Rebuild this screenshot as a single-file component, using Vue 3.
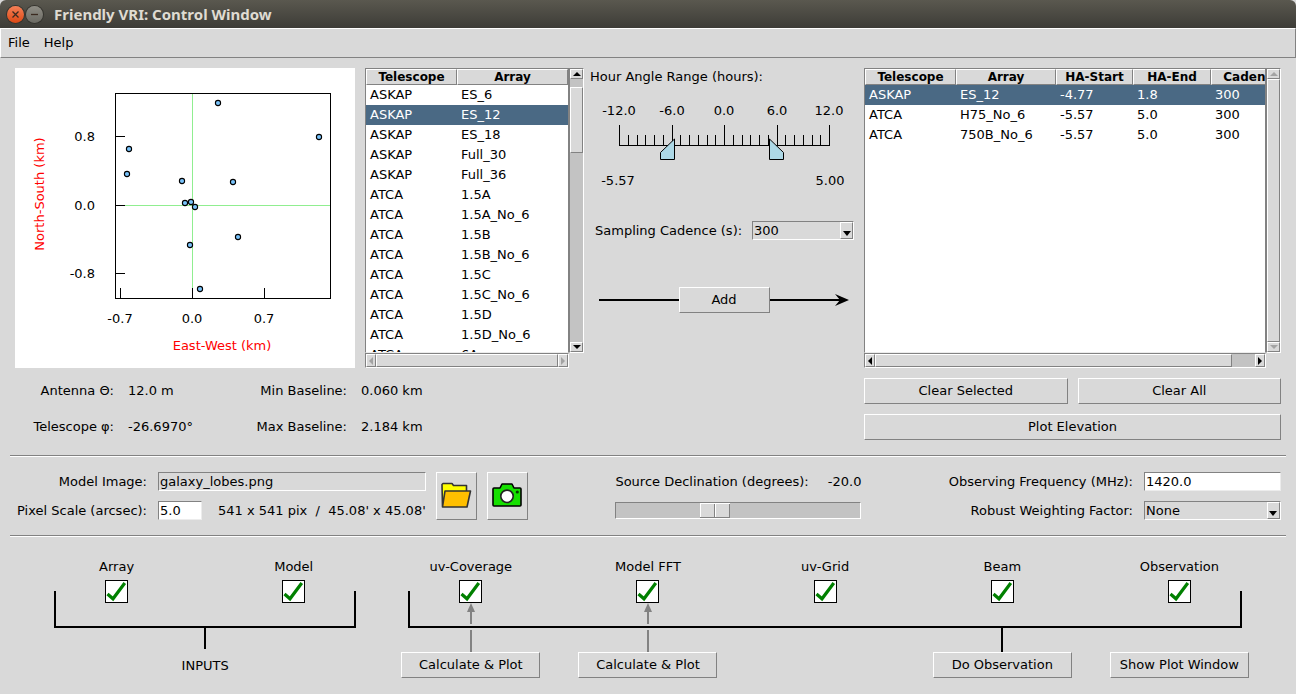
<script setup>
import { ref } from 'vue'

const antennas = [
  [203, 35], [304, 69], [114, 81], [112, 106], [167, 113], [170, 135],
  [176, 134], [180, 139], [218, 114], [223, 169], [175, 177], [185, 221]
]
const arrays = [
  ['ASKAP', 'ES_6'], ['ASKAP', 'ES_12'], ['ASKAP', 'ES_18'], ['ASKAP', 'Full_30'],
  ['ASKAP', 'Full_36'], ['ATCA', '1.5A'], ['ATCA', '1.5A_No_6'], ['ATCA', '1.5B'],
  ['ATCA', '1.5B_No_6'], ['ATCA', '1.5C'], ['ATCA', '1.5C_No_6'], ['ATCA', '1.5D'],
  ['ATCA', '1.5D_No_6'], ['ATCA', '6A']
]
const selections = [
  ['ASKAP', 'ES_12', '-4.77', '1.8', '300'],
  ['ATCA', 'H75_No_6', '-5.57', '5.0', '300'],
  ['ATCA', '750B_No_6', '-5.57', '5.0', '300']
]
const selectedArray = ref(1)
const selectedRow = ref(0)

const ticks = Array.from({ length: 25 }, (_, i) => ({
  x: 29 + Math.round(i * 8.75),
  label: i % 6 === 0 ? (i - 12).toFixed(1) : ''
}))
const haStart = ref(-5.57)
const haEnd = ref(5)
const cadence = ref('300')
const declination = ref(-20)
const robust = ref('None')
const imageName = ref('galaxy_lobes.png')
const pixelScale = ref('5.0')
const frequency = ref('1420.0')

const stages = ref([
  { id: 'array', label: 'Array', done: true },
  { id: 'model', label: 'Model', done: true },
  { id: 'uvcov', label: 'uv-Coverage', done: true, action: 'Calculate & Plot', link: 'arrow' },
  { id: 'fft', label: 'Model FFT', done: true, action: 'Calculate & Plot', link: 'arrow' },
  { id: 'grid', label: 'uv-Grid', done: true },
  { id: 'beam', label: 'Beam', done: true, action: 'Do Observation', link: 'stem' },
  { id: 'obs', label: 'Observation', done: true, action: 'Show Plot Window' }
])
</script>

<template>
  <div class="window">
    <header class="titlebar">
      <button class="wm close" aria-label="Close">
        <svg width="17" height="17" viewBox="0 0 17 17"><path d="M5.5 5.5l6 6M11.5 5.5l-6 6" /></svg>
      </button>
      <button class="wm minimise" aria-label="Minimise">
        <svg width="17" height="17" viewBox="0 0 17 17"><path d="M5 8.5h7" /></svg>
      </button>
      <h1>Friendly VRI: Control Window</h1>
    </header>

    <nav class="menubar">
      <button>File</button>
      <button>Help</button>
    </nav>

    <main>
      <section class="top">
        <div class="left">
          <div class="pair">
            <svg class="plot" width="340" height="300" viewBox="0 0 340 300">
              <g class="cross">
                <path d="M177.500 25V230M100 137.500H315" />
              </g>
              <g class="frame">
                <rect x="100.500" y="25.500" width="215" height="205" />
                <path d="M100 68.500h10M100 137.500h10M100 205.500h10M105.500 230v-10M177.500 230v-10M249.500 230v-10" />
              </g>
              <circle v-for="(p, i) in antennas" :key="i" :cx="p[0]" :cy="p[1]" r="2.600" />
              <g text-anchor="end">
                <text x="80" y="73">0.8</text>
                <text x="80" y="142">0.0</text>
                <text x="80" y="210">-0.8</text>
              </g>
              <g text-anchor="middle">
                <text x="105" y="255">-0.7</text>
                <text x="177" y="255">0.0</text>
                <text x="249" y="255">0.7</text>
                <text class="axis" x="207" y="282">East-West (km)</text>
                <text class="axis" transform="translate(29 126) rotate(-90)">North-South (km)</text>
              </g>
            </svg>

            <div class="list arrays">
              <div class="view">
                <table>
                  <colgroup><col class="c91"><col></colgroup>
                  <thead><tr><th>Telescope</th><th>Array</th></tr></thead>
                  <tbody>
                    <tr v-for="(r, i) in arrays" :key="i" :class="{ on: i === selectedArray }" @click="selectedArray = i">
                      <td v-for="c in r" :key="c">{{ c }}</td>
                    </tr>
                  </tbody>
                </table>
              </div>
              <div class="bar vert">
                <button aria-label="Scroll up"><svg width="8" height="4" viewBox="0 0 8 4"><path d="M0 4L4 0L8 4z" /></svg></button>
                <div class="track"><div class="thumb part"></div></div>
                <button aria-label="Scroll down"><svg width="8" height="4" viewBox="0 0 8 4"><path d="M0 0L4 4L8 0z" /></svg></button>
              </div>
              <div class="bar horiz">
                <button disabled aria-label="Scroll left"><svg width="4" height="8" viewBox="0 0 4 8"><path d="M4 0L0 4L4 8z" /></svg></button>
                <div class="track"><div class="thumb"></div></div>
                <button disabled aria-label="Scroll right"><svg width="4" height="8" viewBox="0 0 4 8"><path d="M0 0L4 4L0 8z" /></svg></button>
              </div>
            </div>
          </div>

          <dl class="facts">
            <dt>Antenna Θ:</dt><dd>12.0 m</dd>
            <dt>Min Baseline:</dt><dd>0.060 km</dd>
            <dt>Telescope φ:</dt><dd>-26.6970°</dd>
            <dt>Max Baseline:</dt><dd>2.184 km</dd>
          </dl>
        </div>

        <div class="middle">
          <h2>Hour Angle Range (hours):</h2>
          <div class="hours">
            <svg width="268" height="110" viewBox="0 2 268 110">
              <path class="rule" d="M29 61.500H240" />
              <g v-for="t in ticks" :key="t.x">
                <path class="rule" :d="`M${t.x + 0.5} 61V${t.label ? 41 : 51}`" />
                <text v-if="t.label" :x="t.x" y="31" text-anchor="middle">{{ t.label }}</text>
              </g>
              <text x="28" y="101" text-anchor="middle">{{ haStart.toFixed(2) }}</text>
              <text x="240" y="101" text-anchor="middle">{{ haEnd.toFixed(2) }}</text>
            </svg>
            <input v-model.number="haStart" class="from" type="range" min="-12" max="12" step="any" aria-label="Hour angle start">
            <input v-model.number="haEnd" class="to" type="range" min="-12" max="12" step="any" aria-label="Hour angle end">
          </div>
          <div class="cadence">
            <label for="cadence">Sampling Cadence (s):</label>
            <span class="combo">
              <select id="cadence" v-model="cadence"><option>60</option><option>300</option><option>600</option></select>
              <span class="drop"><svg width="8" height="5" viewBox="0 0 8 5"><path d="M0 0L4 5L8 0z" /></svg></span>
            </span>
          </div>
          <div class="add">
            <span class="line"></span>
            <button class="btn">Add</button>
            <span class="line tip"></span>
            <svg class="head" width="14" height="12" viewBox="0 0 14 12"><path d="M0 0L14 6L0 12L5 6z" /></svg>
          </div>
        </div>

        <div class="right">
          <div class="list chosen">
            <div class="view">
              <table>
                <colgroup><col class="c91"><col class="c100"><col class="c77"><col class="c78"><col></colgroup>
                <thead><tr><th>Telescope</th><th>Array</th><th>HA-Start</th><th>HA-End</th><th>Cadence</th></tr></thead>
                <tbody>
                  <tr v-for="(r, i) in selections" :key="i" :class="{ on: i === selectedRow }" @click="selectedRow = i">
                    <td v-for="(c, j) in r" :key="j">{{ c }}</td>
                  </tr>
                </tbody>
              </table>
            </div>
            <div class="bar vert">
              <button disabled aria-label="Scroll up"><svg width="8" height="4" viewBox="0 0 8 4"><path d="M0 4L4 0L8 4z" /></svg></button>
              <div class="track"><div class="thumb"></div></div>
              <button disabled aria-label="Scroll down"><svg width="8" height="4" viewBox="0 0 8 4"><path d="M0 0L4 4L8 0z" /></svg></button>
            </div>
            <div class="bar horiz">
              <button aria-label="Scroll left"><svg width="4" height="8" viewBox="0 0 4 8"><path d="M4 0L0 4L4 8z" /></svg></button>
              <div class="track"><div class="thumb part"></div></div>
              <button aria-label="Scroll right"><svg width="4" height="8" viewBox="0 0 4 8"><path d="M0 0L4 4L0 8z" /></svg></button>
            </div>
          </div>
          <div class="actions">
            <button class="btn">Clear Selected</button>
            <button class="btn">Clear All</button>
            <button class="btn wide">Plot Elevation</button>
          </div>
        </div>
      </section>

      <hr>

      <section class="settings">
        <div class="model">
          <label for="image">Model Image:</label>
          <input id="image" v-model="imageName" class="field flat" readonly>
          <label for="scale">Pixel Scale (arcsec):</label>
          <div class="scale">
            <input id="scale" v-model="pixelScale" class="field">
            <span>541 x 541 pix&nbsp; /&nbsp; 45.08' x 45.08'</span>
          </div>
          <button class="btn icon" aria-label="Open model image">
            <svg width="31" height="28" viewBox="0 0 31 28">
              <path d="M1 24V2.500L2 1.500H11L12.500 3.500H25.500V9H4z" fill="#ffff00" />
              <path d="M4 9H29.500L26 25H1.500z" fill="#ffbf00" />
              <path d="M1.500 25L1 2.500L2 1.500H11L12.500 3.500H25.500V9M4 9H29.500L26 25H1.500z" fill="none" stroke="#333" stroke-width="1.600" stroke-linejoin="round" />
            </svg>
          </button>
          <button class="btn icon" aria-label="Capture model image">
            <svg width="31" height="28" viewBox="0 0 31 28">
              <path d="M2 6H8L10 2H20L22 6H28Q29 6 29 7V23Q29 24 28 24H2Q1 24 1 23V7Q1 6 2 6z" fill="#16e000" stroke="#000" stroke-width="1.600" stroke-linejoin="round" />
              <circle cx="15" cy="14.300" r="6.200" fill="#fff" stroke="#222" stroke-width="1.600" />
              <circle cx="25.300" cy="10" r="1.600" fill="#063c00" />
            </svg>
          </button>
        </div>

        <div class="declination">
          <label for="dec">Source Declination (degrees):</label>
          <output for="dec">{{ declination.toFixed(1) }}</output>
          <input id="dec" v-model.number="declination" type="range" min="-90" max="90">
        </div>

        <div class="observe">
          <label for="freq">Observing Frequency (MHz):</label>
          <input id="freq" v-model="frequency" class="field">
          <label for="robust">Robust Weighting Factor:</label>
          <span class="combo">
            <select id="robust" v-model="robust"><option>None</option><option>0.0</option><option>2.0</option></select>
            <span class="drop"><svg width="8" height="5" viewBox="0 0 8 5"><path d="M0 0L4 5L8 0z" /></svg></span>
          </span>
        </div>
      </section>

      <hr>

      <section class="stages">
        <div class="bracket inputs"></div>
        <div class="bracket outputs"></div>
        <div class="group"><i class="stem"></i><span>INPUTS</span></div>
        <div v-for="s in stages" :key="s.id" class="stage">
          <label :for="s.id">{{ s.label }}</label>
          <input :id="s.id" v-model="s.done" type="checkbox">
          <div class="link">
            <svg v-if="s.link === 'arrow'" width="12" height="49" viewBox="0 0 12 49">
              <path d="M6 8V21M6 27V49" stroke="#828282" stroke-width="2" />
              <path d="M6 0L10 9H2z" fill="#828282" />
            </svg>
            <i v-if="s.link === 'stem'" class="stem"></i>
          </div>
          <button v-if="s.action" class="btn">{{ s.action }}</button>
        </div>
      </section>
    </main>
  </div>
</template>

<style>
body {
  margin: 0;
  background: #d9d9d9;
}
</style>

<style scoped>
.window {
  --light: #ffffff;
  --dark: #828282;
  --face: #d9d9d9;
  --trough: #c3c3c3;
  min-height: 100vh;
  background: var(--face);
  color: #000;
  font: 13px/16px "DejaVu Sans", sans-serif;
}
.window * {
  box-sizing: border-box;
}
button, input, select {
  margin: 0;
  padding: 0;
  border: 0;
  border-radius: 0;
  background: transparent;
  color: inherit;
  font: inherit;
  appearance: none;
  outline: none;
}
svg {
  display: block;
}

.titlebar {
  display: flex;
  align-items: center;
  gap: 2px;
  height: 28px;
  padding: 0 7px;
  border-radius: 6px 6px 0 0;
  background: linear-gradient(#5a584f, #3d3c37);
}
.titlebar h1 {
  margin: 0 0 0 9px;
  color: #dfdbd2;
  font: bold 15px/18px "Noto Sans", sans-serif;
}
.wm {
  width: 17px;
  height: 17px;
  border-radius: 50%;
  box-shadow: 0 0 0 1px #35342f;
}
.wm path {
  fill: none;
  stroke: #3b2a20;
  stroke-width: 1.3;
}
.close {
  background: linear-gradient(#f58057, #dd4814);
}
.minimise {
  background: linear-gradient(#8f8d85, #6b6a63);
}

.menubar {
  display: flex;
  gap: 14px;
  height: 30px;
  padding: 0 7px;
  border: 1px solid;
  border-color: var(--light) var(--dark) var(--dark) var(--light);
}

hr {
  height: 2px;
  margin: 0 10px;
  border: 0;
  border-top: 1px solid var(--dark);
  border-bottom: 1px solid var(--light);
}

.top {
  display: flex;
  gap: 6px;
  padding: 10px 15px 15px;
}
.pair {
  display: flex;
  gap: 10px;
}
.plot {
  background: #fff;
}
.cross path {
  fill: none;
  stroke: #90ee90;
}
.frame rect, .frame path {
  fill: none;
  stroke: #000;
}
.plot circle {
  fill: #78c2fa;
  stroke: #000;
  stroke-width: 1.1;
}
.axis {
  fill: #f00;
}
.facts {
  display: grid;
  grid-template-columns: 99px 106px 99px 1fr;
  gap: 20px 14px;
  margin: 15px 0 0;
}
.facts dt {
  text-align: right;
}
.facts dd {
  margin: 0;
}

.list {
  display: grid;
  grid-template-columns: minmax(0, 1fr) 15px;
  grid-template-rows: 285px 15px;
}
.arrays {
  width: 219px;
}
.view {
  overflow: hidden;
  border: 1px solid var(--dark);
  border-bottom-color: #ececec;
  background: #fff;
}
table {
  width: 100%;
  border-collapse: separate;
  border-spacing: 0;
  table-layout: fixed;
}
.chosen table {
  width: 428px;
}
.c77 { width: 77px; }
.c78 { width: 78px; }
.c91 { width: 91px; }
.c100 { width: 100px; }
th {
  height: 16px;
  padding: 0;
  border: 1px solid;
  border-color: var(--light) var(--dark) var(--dark) var(--light);
  background: var(--face);
  font-size: 12px;
  line-height: 14px;
}
td {
  height: 20px;
  padding: 0 4px;
  line-height: 20px;
  white-space: nowrap;
}
.on td {
  background: #4a6984;
  color: #fff;
}

.bar {
  display: flex;
  border: 1px solid;
  border-color: var(--dark) var(--light) var(--light) var(--dark);
  background: var(--trough);
}
.vert {
  flex-direction: column;
}
.bar button {
  display: grid;
  flex: none;
  place-items: center;
  background: var(--face);
}
.vert button {
  height: 10px;
}
.horiz button {
  width: 10px;
}
.bar button, .thumb {
  border: 1px solid;
  border-color: var(--light) var(--dark) var(--dark) var(--light);
}
.bar button:disabled path {
  fill: #a3a3a3;
}
.track {
  flex: 1;
}
.thumb {
  height: 100%;
  background: var(--face);
}
.vert .part {
  height: 25%;
  margin-top: 8px;
}
.horiz .part {
  width: 94%;
}

.middle {
  flex: none;
  width: 268px;
}
.middle h2 {
  margin: 0;
  font-size: 13px;
  font-weight: normal;
  line-height: 18px;
}
.hours {
  position: relative;
}
.rule {
  fill: none;
  stroke: #000;
}
.hours input {
  position: absolute;
  top: 52px;
  width: 225px;
  height: 22px;
  pointer-events: none;
}
.hours .from {
  left: 14px;
}
.hours .to {
  left: 30px;
}
.hours input::-webkit-slider-thumb {
  width: 15px;
  height: 22px;
  border: 0;
  appearance: none;
  pointer-events: auto;
}
.from::-webkit-slider-thumb {
  background: url("data:image/svg+xml,%3Csvg xmlns='http://www.w3.org/2000/svg' width='15' height='22'%3E%3Cpath d='M14.5 1V21.500H.5V14.500z' fill='%23add8e6' stroke='%23000'/%3E%3C/svg%3E");
}
.to::-webkit-slider-thumb {
  background: url("data:image/svg+xml,%3Csvg xmlns='http://www.w3.org/2000/svg' width='15' height='22'%3E%3Cpath d='M.5 1V21.500H14.500V14.500z' fill='%23add8e6' stroke='%23000'/%3E%3C/svg%3E");
}
.cadence {
  display: flex;
  align-items: center;
  justify-content: space-between;
  margin-top: 25px;
  padding: 0 4px 0 5px;
}
.combo {
  position: relative;
  display: block;
  width: 102px;
  height: 19px;
}
.combo select, .field {
  display: block;
  width: 100%;
  height: 19px;
  padding: 0 1px;
  border: 1px solid;
  border-color: var(--dark) var(--light) var(--light) var(--dark);
}
.drop {
  position: absolute;
  top: 1px;
  right: 1px;
  bottom: 1px;
  display: grid;
  width: 13px;
  padding-top: 5px;
  border: 1px solid;
  border-color: var(--light) var(--dark) var(--dark) var(--light);
  background: var(--face);
  place-items: center;
  pointer-events: none;
}
.add {
  display: flex;
  align-items: center;
  margin-top: 47px;
  padding: 0 9px;
}
.add .btn {
  width: 91px;
}
.line {
  flex: 1;
  height: 2px;
  background: #000;
}
.tip {
  background: linear-gradient(#000, #000) 0 0 / calc(100% - 8px) 100% no-repeat;
}
.head {
  margin-left: -14px;
}

.btn {
  height: 26px;
  border: 1px solid;
  border-color: var(--light) var(--dark) var(--dark) var(--light);
  text-align: center;
}
.right {
  flex: 1;
  min-width: 0;
}
.actions {
  display: grid;
  grid-template-columns: 1fr 1fr;
  gap: 10px;
  margin-top: 10px;
}
.wide {
  grid-column: 1 / -1;
}

.settings {
  display: flex;
  justify-content: space-between;
  padding: 15px;
}
.model {
  display: grid;
  grid-template-columns: 132px 268px 41px 41px;
  grid-template-rows: 19px 19px;
  grid-auto-flow: column;
  gap: 10px;
  align-items: center;
  padding-left: 1px;
}
.model label, .observe label {
  padding-right: 1px;
  text-align: right;
  white-space: nowrap;
}
.model > :nth-child(1) { grid-area: 1 / 1; }
.model > :nth-child(2) { grid-area: 1 / 2; }
.model > :nth-child(3) { grid-area: 2 / 1; }
.model > :nth-child(4) { grid-area: 2 / 2; }
.field {
  background: #fff;
  border-color: var(--dark) #ececec #ececec var(--dark);
}
.flat {
  background: var(--face);
  border-color: var(--dark) var(--light) var(--light) var(--dark);
}
.scale {
  display: flex;
  align-items: center;
  gap: 16px;
  white-space: nowrap;
}
.scale .field {
  flex: none;
  width: 44px;
}
.icon {
  display: grid;
  grid-row: 1 / 3;
  height: 48px;
  place-items: center;
}
.declination {
  display: grid;
  grid-template-columns: 1fr auto;
  grid-template-rows: 19px 17px;
  row-gap: 11px;
  align-items: center;
  width: 246px;
}
.declination input {
  grid-column: 1 / -1;
  width: 100%;
  height: 17px;
  border: 1px solid;
  border-color: var(--dark) var(--light) var(--light) var(--dark);
  background: var(--trough);
}
.declination input::-webkit-slider-thumb {
  width: 30px;
  height: 15px;
  appearance: none;
  background:
    linear-gradient(#fff, #fff) 0 0 / 30px 1px no-repeat,
    linear-gradient(#828282, #828282) 0 14px / 30px 1px no-repeat,
    linear-gradient(90deg, #fff 1px, #d9d9d9 1px, #d9d9d9 14px, #828282 14px) 0 0 / 15px 15px repeat-x;
}
.observe {
  display: grid;
  grid-template-columns: auto 137px;
  gap: 10px;
  align-items: center;
}
.observe .combo {
  width: 100%;
}

.stages {
  display: grid;
  grid-template-columns: repeat(7, 1fr);
  grid-template-rows: 16px 5px 23px 49px 26px;
  padding: 22px 28px 16px;
}
.bracket {
  grid-row: 3 / 5;
  height: 37px;
  margin: 11px 26px 0;
  border: 2px solid #000;
  border-top: 0;
}
.inputs {
  grid-column: 1 / 3;
}
.outputs {
  grid-column: 3 / 8;
}
.group {
  display: flex;
  flex-direction: column;
  grid-area: 4 / 1 / 6 / 3;
  align-items: center;
  padding-top: 24px;
}
.group span {
  margin-top: 9px;
}
.stem {
  display: block;
  width: 2px;
  height: 22px;
  background: #000;
}
.stage {
  display: grid;
  grid-row: 1 / 6;
  grid-template-rows: subgrid;
  justify-items: center;
}
.stage:nth-of-type(4) { grid-column: 1; }
.stage:nth-of-type(5) { grid-column: 2; }
.stage:nth-of-type(6) { grid-column: 3; }
.stage:nth-of-type(7) { grid-column: 4; }
.stage:nth-of-type(8) { grid-column: 5; }
.stage:nth-of-type(9) { grid-column: 6; }
.stage:nth-of-type(10) { grid-column: 7; }
.stage input {
  grid-row: 3;
  width: 23px;
  height: 23px;
  border: 1px solid #000;
  background: #fff;
}
.stage input:checked {
  background: #fff url("data:image/svg+xml,%3Csvg xmlns='http://www.w3.org/2000/svg' width='21' height='21'%3E%3Cpath d='M1.500 13L7 17.800L18.800 2' fill='none' stroke='%23008000' stroke-width='3.200'/%3E%3C/svg%3E");
}
.link {
  display: flex;
  grid-row: 4;
  align-items: flex-end;
}
.link .stem {
  height: 25px;
}
.stage .btn {
  grid-row: 5;
  width: 139px;
}
</style>
